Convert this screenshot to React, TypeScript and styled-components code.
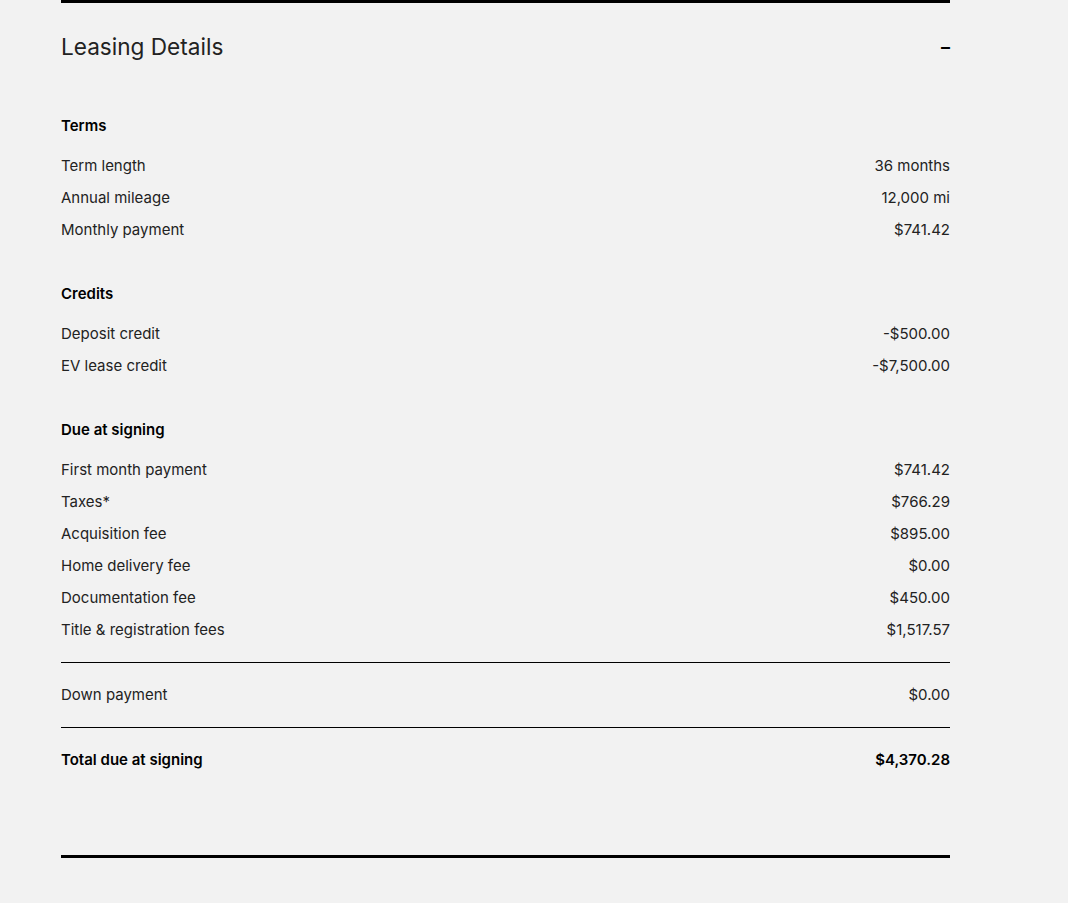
import styled, { createGlobalStyle } from "styled-components";

const Global = createGlobalStyle`
  body {
    margin: 0;
    background: #f2f2f2;
    font-family: Inter, "Noto Sans", sans-serif;
    color: #171a20;
  }
`;

const Panel = styled.section`
  width: 889px;
  margin-left: 61px;
  border-top: 3px solid #000;
  border-bottom: 3px solid #000;
  padding-bottom: 63px;
`;

const Header = styled.div`
  height: 87px;
  display: flex;
  align-items: center;
  justify-content: space-between;
  margin-bottom: 24px;
`;

const Title = styled.h2`
  margin: 0;
  font-size: 22.6px;
  font-weight: 400;
  color: #222;
`;

const Toggle = styled.span`
  font-size: 18px;
  font-weight: 600;
  color: #000;
`;

const Group = styled.div<{ $last?: boolean }>`
  margin-bottom: ${(p) => (p.$last ? 16 : 36)}px;
`;

const GroupTitle = styled.div`
  height: 24px;
  line-height: 24px;
  font-size: 15px;
  font-weight: 600;
  color: #000;
  margin-bottom: 12px;
`;

const Row = styled.div<{ $bold?: boolean }>`
  display: flex;
  justify-content: space-between;
  height: 32px;
  line-height: 32px;
  font-size: 15px;
  font-weight: ${(p) => (p.$bold ? 600 : 400)};
  color: ${(p) => (p.$bold ? "#000" : "#222")};
`;

const Divided = styled.div`
  border-top: 1px solid #000;
  padding: 16px 0;
`;

type Item = [string, string];

const groups: { title: string; items: Item[] }[] = [
  {
    title: "Terms",
    items: [
      ["Term length", "36 months"],
      ["Annual mileage", "12,000 mi"],
      ["Monthly payment", "$741.42"],
    ],
  },
  {
    title: "Credits",
    items: [
      ["Deposit credit", "-$500.00"],
      ["EV lease credit", "-$7,500.00"],
    ],
  },
];

const signing: Item[] = [
  ["First month payment", "$741.42"],
  ["Taxes*", "$766.29"],
  ["Acquisition fee", "$895.00"],
  ["Home delivery fee", "$0.00"],
  ["Documentation fee", "$450.00"],
  ["Title & registration fees", "$1,517.57"],
];

export default function App() {
  return (
    <>
      <Global />
      <Panel>
        <Header>
          <Title>Leasing Details</Title>
          <Toggle>–</Toggle>
        </Header>
        {groups.map((g) => (
          <Group key={g.title}>
            <GroupTitle>{g.title}</GroupTitle>
            {g.items.map(([k, v]) => (
              <Row key={k}>
                <span>{k}</span>
                <span>{v}</span>
              </Row>
            ))}
          </Group>
        ))}
        <Group $last>
          <GroupTitle>Due at signing</GroupTitle>
          {signing.map(([k, v]) => (
            <Row key={k}>
              <span>{k}</span>
              <span>{v}</span>
            </Row>
          ))}
        </Group>
        <Divided>
          <Row>
            <span>Down payment</span>
            <span>$0.00</span>
          </Row>
        </Divided>
        <Divided>
          <Row $bold>
            <span>Total due at signing</span>
            <span>$4,370.28</span>
          </Row>
        </Divided>
      </Panel>
    </>
  );
}
